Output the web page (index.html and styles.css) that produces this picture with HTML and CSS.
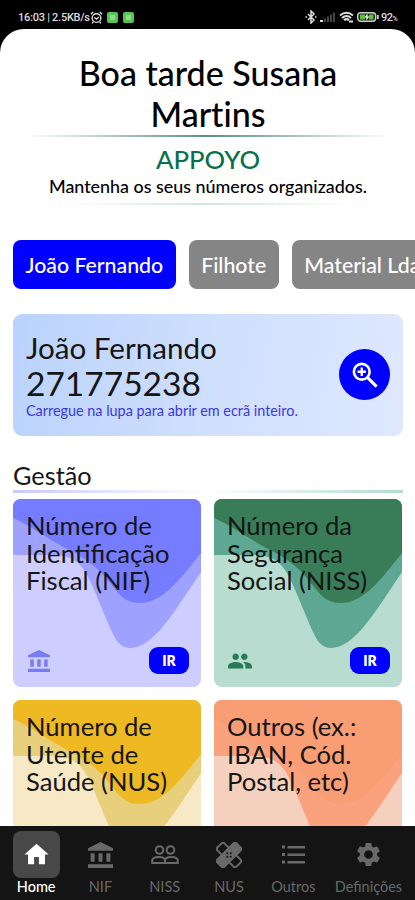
FILE: index.html
```html
<!DOCTYPE html>
<html lang="pt">
<head>
<meta charset="utf-8">
<title>Appoyo</title>
<link rel="stylesheet" href="styles.css">
</head>
<body>
<svg width="0" height="0" class="defs">
  <symbol id="wave" viewBox="0 0 188 188" preserveAspectRatio="none">
    <path class="wave-mid" d="M0 0V56H38C56 56 66 61 74 76C84 95 92 119 101 137C105 145 110 149 117 149C140 149 160 115 188 73V0Z"/>
    <path class="wave-top" d="M0 0V19C17 26 36 41 56 51C87 66 96 84 106 95C112 101 118 104 127 104C150 104 168 79 188 54V0Z"/>
  </symbol>
  <symbol id="bank" viewBox="2 1 19 21" preserveAspectRatio="none"><path d="M4 10v7h3v-7H4zm6 0v7h3v-7h-3zM2 22h19v-3H2v3zm14-12v7h3v-7h-3zM11.500 1L2 6v2h19V6l-9.500-5z"/></symbol>
</svg>
<div class="phone">
  <header class="status">
    <span class="clock">16:03 | 2.5KB/s</span>
    <svg class="alarm" viewBox="0 0 12 12" fill="none" stroke="#ddd" stroke-width="1.300"><circle cx="6" cy="6.500" r="4"/><path d="M.8 3L3 1M11.200 3L9 1M4 6l2 1.500L8 5.500M3 10l-1 1.500M9 10l1 1.500"/></svg>
    <i class="app-dot"></i><i class="app-dot"></i>
    <span class="spacer"></span>
    <svg class="bt" viewBox="0 0 12 14" fill="none" stroke="#ddd" stroke-width="1.500"><path d="M3 4l6 6-3 3V1l3 3-6 6M.5 7h1.500M10 7h1.500"/></svg>
    <svg class="signal" viewBox="0 0 16 12"><path fill="#ddd" d="M0 9h3v2H0z"/><path fill="#444" d="M4 7.500h2V11H4zM7 5.500h2V11H7zM10 3.500h2V11h-2zM13 1.500h2V11h-2z"/></svg>
    <svg class="wifi" viewBox="0 0 15 12" fill="none" stroke="#ddd" stroke-width="2"><path d="M1 4.500Q7.500-1 14 4.500M3 7Q7.500 3 12 7M5 9.200Q7.500 7 10 9.200"/><path d="M10 10.500h4"/></svg>
    <svg class="battery" viewBox="0 0 22 12"><rect x=".7" y="1.700" width="18" height="8.600" rx="3" fill="#222" stroke="#ccc" stroke-width="1.400"/><path fill="#ccc" d="M20 4h1.800v4H20z"/><path fill="#5bc236" d="M3 3.500h5v5H3zM12 3.500h4.500v5H12z"/><path fill="#fff" d="M10.500 2.500L7.500 6.500h2l-.5 3 3.500-4h-2z"/></svg>
    <span class="percent">92<small>%</small></span>
  </header>
  <main class="sheet">
    <section class="intro">
      <h1>Boa tarde Susana<br>Martins</h1>
      <div class="rule rule-strong"></div>
      <h2>APPOYO</h2>
      <p>Mantenha os seus números organizados.</p>
      <div class="rule rule-soft"></div>
    </section>
    <div class="chips">
      <button class="chip active">João Fernando</button>
      <button class="chip">Filhote</button>
      <button class="chip">Material Lda</button>
    </div>
    <section class="profile">
      <div>
        <div class="name">João Fernando</div>
        <div class="number">271775238</div>
        <div class="hint">Carregue na lupa para abrir em ecrã inteiro.</div>
      </div>
      <button class="zoom"><svg viewBox="0 0 28 28" fill="none" stroke="#fff"><circle cx="10.500" cy="10.500" r="8.500" stroke-width="2.800"/><path d="M16.500 16.500l10 10" stroke-width="3.300"/><path d="M10.500 6v9M6 10.500h9" stroke-width="2.500"/></svg></button>
    </section>
    <h3>Gestão</h3>
    <div class="split"><i></i><i></i></div>
    <section class="grid">
      <article class="card nif">
        <svg class="waves"><use href="#wave"/></svg>
        <h4>Número de<br>Identificação<br>Fiscal (NIF)</h4>
        <footer><svg class="mark bank"><use href="#bank"/></svg><button>IR</button></footer>
      </article>
      <article class="card niss">
        <svg class="waves"><use href="#wave"/></svg>
        <h4>Número da<br>Segurança<br>Social (NISS)</h4>
        <footer><svg class="mark" viewBox="0 0 24 24"><path d="M16 11c1.660 0 3-1.340 3-3s-1.340-3-3-3-3 1.340-3 3 1.340 3 3 3zm-8 0c1.660 0 3-1.340 3-3S9.660 5 8 5 5 6.340 5 8s1.340 3 3 3zm0 2c-2.330 0-7 1.170-7 3.500V19h14v-2.500C15 14.170 10.330 13 8 13zm8 0c-.29 0-.62.020-.97.050C16.190 13.890 17 15.020 17 16.500V19h6v-2.500c0-2.330-4.670-3.500-7-3.500z"/></svg><button>IR</button></footer>
      </article>
      <article class="card nus">
        <svg class="waves"><use href="#wave"/></svg>
        <h4>Número de<br>Utente de<br>Saúde (NUS)</h4>
      </article>
      <article class="card other">
        <svg class="waves"><use href="#wave"/></svg>
        <h4>Outros (ex.:<br>IBAN, Cód.<br>Postal, etc)</h4>
      </article>
    </section>
  </main>
  <nav>
    <a class="on"><span><svg class="home" viewBox="0 0 24 24"><path d="M10 20v-6h4v6h5v-8h3L12 3 2 12h3v8z"/></svg></span>Home</a>
    <a><span><svg class="bank"><use href="#bank"/></svg></span>NIF</a>
    <a><span><svg class="wide" viewBox="0 0 28 20" fill="none" stroke="#696969" stroke-width="2"><circle cx="8.500" cy="5" r="3.800"/><circle cx="19.500" cy="5" r="3.800"/><path d="M1.200 18v-2.500C1.200 13 5 12 8 12s6 1 6 3.500V18zM14 18h12.800v-2.500c0-2.500-3.800-3.500-6.800-3.500-3 0-6 1-6 3.500"/></svg></span>NISS</a>
    <a><span><svg viewBox="0 0 26 26"><g transform="rotate(45 13 13)"><rect x="-.5" y="8" width="27" height="10" rx="2" fill="none" stroke="#696969" stroke-width="2"/></g><g transform="rotate(-45 13 13)"><rect x="-1.500" y="7" width="29" height="12" rx="2.500"/><g fill="#141414"><circle cx="10.500" cy="13" r="1"/><circle cx="15.500" cy="13" r="1"/><circle cx="13" cy="10.500" r="1"/><circle cx="13" cy="15.500" r="1"/></g></g></svg></span>NUS</a>
    <a><span><svg class="list" viewBox="0 0 24 24"><path d="M1 3h3v3H1zM1 10.500h3v3H1zM1 18h3v3H1zM6.500 3.500H24V6H6.500zM6.500 11H24v2.500H6.500zM6.500 18.500H24V21H6.500z"/></svg></span>Outros</a>
    <a class="last"><span><svg class="gear" viewBox="0 0 24 24"><path d="M19.140 12.940c.04-.3.060-.61.060-.94 0-.32-.02-.64-.07-.94l2.030-1.580c.18-.14.230-.41.120-.61l-1.920-3.320c-.12-.22-.37-.29-.59-.22l-2.390.96c-.5-.38-1.030-.7-1.620-.94l-.36-2.540c-.04-.24-.24-.41-.48-.41h-3.840c-.24 0-.43.170-.47.410l-.36 2.540c-.59.240-1.130.570-1.620.94l-2.390-.96c-.22-.08-.47 0-.59.220L2.740 8.870c-.12.210-.08.470.12.610l2.030 1.580c-.05.300-.09.630-.09.940s.02.640.07.940l-2.030 1.580c-.18.140-.23.410-.12.610l1.920 3.320c.12.220.37.290.59.220l2.390-.96c.5.380 1.030.7 1.620.94l.36 2.540c.05.240.24.410.48.410h3.840c.24 0 .44-.17.470-.41l.36-2.540c.59-.24 1.130-.56 1.620-.94l2.390.96c.22.080.47 0 .59-.22l1.920-3.320c.12-.22.070-.47-.12-.61l-2.010-1.580zM12 15.600c-1.980 0-3.600-1.620-3.600-3.600s1.620-3.600 3.600-3.600 3.600 1.620 3.600 3.600-1.620 3.600-3.600 3.600z"/></svg></span>Definições</a>
  </nav>
</div>
</body>
</html>
```
FILE: styles.css
```css
* { box-sizing: border-box; }
body { margin: 0; background: #000; font-family: Lato, sans-serif; color: #151515; }
h1, h2, h3, h4, p { margin: 0; font-weight: 400; }
button { border: 0; padding: 0; font-family: inherit; color: #fff; white-space: nowrap; }
.defs { position: absolute; }
.phone { width: 415px; height: 900px; overflow: hidden; display: flex; flex-direction: column; }

.status { height: 29px; flex: none; display: flex; align-items: center; padding: 5px 17px 0 18px; color: #ddd; font: 500 11px Roboto, sans-serif; }
.clock { width: 72px; letter-spacing: -0.250px; white-space: nowrap; }
.alarm { width: 13px; height: 13px; margin-right: 4px; }
.app-dot { width: 11px; height: 11px; border-radius: 2px; margin-right: 5px; border: 3px solid #58c452; background: #8fdc88; }
.spacer { flex: 1; }
.bt { width: 12px; height: 14px; margin-right: 3px; }
.signal { width: 16px; height: 12px; margin-right: 3px; }
.wifi { width: 15px; height: 12px; margin-right: 3px; }
.battery { width: 22px; height: 12px; margin-right: 2px; }
.percent { width: 17px; letter-spacing: -0.500px; }
.percent small { font-size: 7px; }

.sheet { flex: 1; min-height: 0; overflow: hidden; background: #fff; border-radius: 24px 24px 0 0; padding: 23px 12px 0 13px; }
.intro { text-align: center; height: 188px; }
h1 { font-size: 34px; line-height: 41px; font-weight: 500; color: #000; font-variant-ligatures: none; }
.rule { height: 2px; }
.rule-strong { margin: 1px 14px 0; background: linear-gradient(90deg, transparent, #5d8d82 50%, transparent); }
h2 { margin-top: 7px; font-size: 25.700px; line-height: 31px; font-weight: 500; color: #08714a; }
.intro p { font-size: 17.900px; line-height: 22px; font-weight: 500; color: #000; white-space: nowrap; }
.rule-soft { margin: 6px 50px 0; background: linear-gradient(90deg, transparent, #cde7de 50%, transparent); }

.chips { display: flex; gap: 13px; width: 460px; }
.chip { height: 49px; padding: 0 12.500px; border-radius: 8px; background: #858585; font-size: 21.300px; font-weight: 500; }
.chip.active { background: #00f; }
.profile { margin-top: 25px; height: 122px; border-radius: 9px; background: linear-gradient(100deg, #bad2fc, #cfdffe 50%, #dfe8fe); padding: 16px 13px 0 13px; display: flex; justify-content: space-between; }
.name { font-size: 29.600px; line-height: 36px; }
.number { font-size: 33.500px; line-height: 35px; }
.hint { font-size: 14.400px; line-height: 20px; color: #3c38e0; white-space: nowrap; }
.zoom { width: 51px; height: 51px; margin-top: 19px; border-radius: 50%; background: #00f; display: grid; place-items: center; }
.zoom svg { width: 26px; height: 26px; }
h3 { margin-top: 23px; font-size: 25.300px; line-height: 32px; }
.split { display: flex; height: 3px; margin: -1px 0 6px; }
.split i { flex: 1; background: linear-gradient(90deg, #c9c9fd, transparent); }
.split i + i { background: linear-gradient(90deg, transparent, #b4dacf); }

.grid { display: grid; grid-template-columns: 188px 188px; gap: 13px; }
.card { position: relative; height: 188px; border-radius: 8px; overflow: hidden; padding: 13px 12px 0 13px; display: flex; flex-direction: column; background: var(--base); }
.waves { position: absolute; inset: 0; width: 188px; height: 188px; }
.wave-mid { fill: var(--mid); }
.wave-top { fill: var(--top); }
h4 { position: relative; font-size: 25.600px; line-height: 27.700px; white-space: nowrap; }
.card footer { position: relative; margin-top: auto; height: 40px; display: flex; justify-content: space-between; align-items: flex-start; }
.card button { width: 40px; height: 27px; border-radius: 9px; background: #00f; font-size: 14px; font-weight: 800; }
.mark { width: 26px; height: 26px; margin-top: 1px; fill: var(--mark); }
.mark.bank { width: 22px; height: 22px; margin: 3px 0 0 2px; }
.nif { --base: #cdcdff; --mid: #9fa1ff; --top: #767cff; --mark: #777cf5; }
.niss { --base: #b9dcd0; --mid: #5da793; --top: #387d57; --mark: #267b58; }
.nus { --base: #f7e8c6; --mid: #e8cf7b; --top: #efb923; }
.other { --base: #f6d0bf; --mid: #faa27e; --top: #f99d75; }

nav { height: 74px; flex: none; background: #141414; padding: 5px 5px 0 4px; display: grid; grid-template-columns: 64.300px 64.300px 64.300px 64.300px 64.300px 84px; }
nav a { display: flex; flex-direction: column; align-items: center; font-size: 14.500px; line-height: 17px; color: #696969; }
.last { padding-left: 2px; }
nav span { width: 47px; height: 47px; border-radius: 8px; display: grid; place-items: center; }
nav svg { width: 26px; height: 26px; fill: #696969; }
nav svg.wide { width: 28px; height: 20px; fill: none; }
nav svg.bank { width: 25px; height: 26px; }
nav svg.home, nav svg.gear { width: 29px; height: 29px; }
nav svg.list { width: 24px; height: 25px; }
.on { color: #fff; font-weight: 500; }
.on span { background: #484848; }
nav .on svg { fill: #fff; }
```
